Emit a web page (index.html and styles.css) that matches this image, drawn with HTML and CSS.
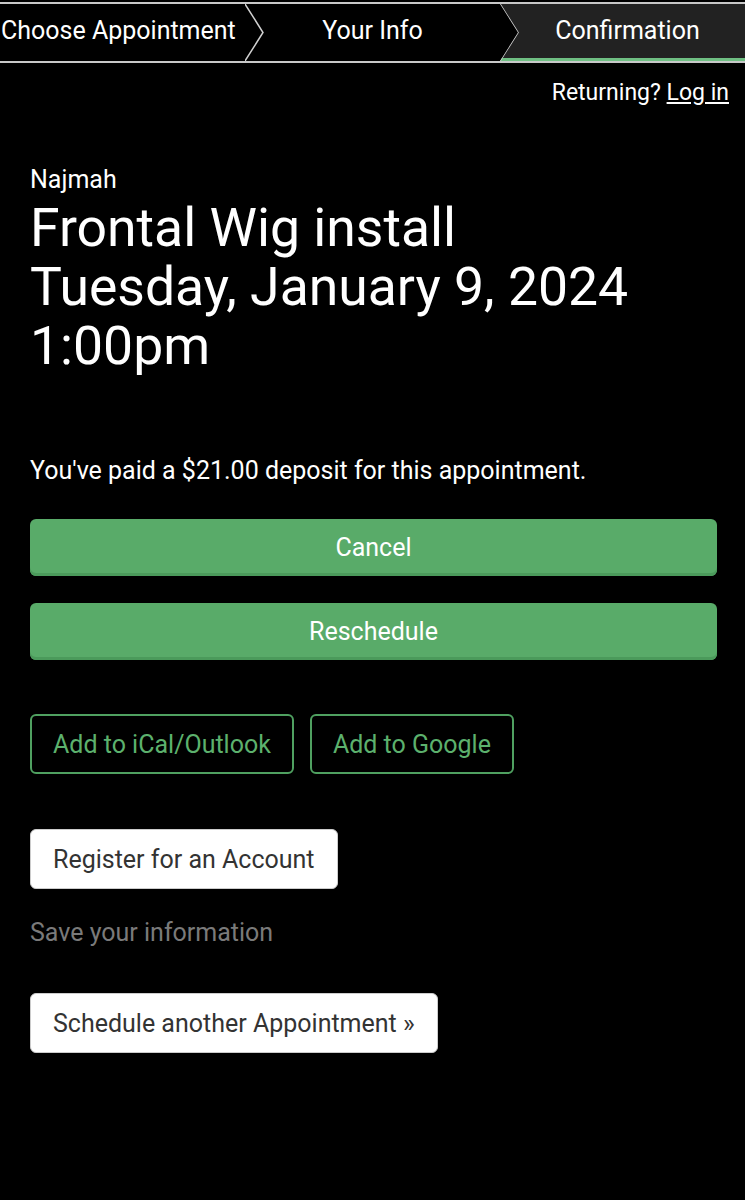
FILE: index.html
```html
<!DOCTYPE html>
<html>
<head>
<meta charset="utf-8">
<link rel="stylesheet" href="styles.css">
</head>
<body>
<nav class="steps">
  <div class="step step-first">Choose Appointment</div>
  <div class="step step-mid">
    <svg class="chev" viewBox="0 0 20 57" preserveAspectRatio="none"><polyline points="0,0 18,28.5 0,57" fill="none" stroke="#d0d0d0" stroke-width="1.5"/></svg>
    Your Info
  </div>
  <div class="step step-active">
    <svg class="chev" viewBox="0 0 20 57" preserveAspectRatio="none"><polyline points="0,0 18,28.5 0,57" fill="none" stroke="#d0d0d0" stroke-width="1.5"/></svg>
    Confirmation
  </div>
</nav>
<div class="returning">Returning? <a href="#" class="login">Log in</a></div>
<main class="content">
  <div class="name">Najmah</div>
  <h1 class="title">Frontal Wig install<br>Tuesday, January 9, 2024<br>1:00pm</h1>
  <p class="deposit">You've paid a $21.00 deposit for this appointment.</p>
  <button class="btn btn-green">Cancel</button>
  <button class="btn btn-green btn-second">Reschedule</button>
  <div class="cal-row">
    <button class="btn btn-outline">Add to iCal/Outlook</button>
    <button class="btn btn-outline">Add to Google</button>
  </div>
  <button class="btn btn-white btn-register">Register for an Account</button>
  <div class="save">Save your information</div>
  <button class="btn btn-white btn-schedule">Schedule another Appointment »</button>
</main>
</body>
</html>
```

FILE: styles.css
```css
html, body {
  margin: 0;
  padding: 0;
  background: #000;
  color: #fff;
  font-family: Roboto, "Noto Sans", sans-serif;
}
.steps {
  display: flex;
  margin-top: 2px;
  height: 57px;
  border-top: 2px solid #c8c8c8;
  border-bottom: 2px solid #c8c8c8;
}
.step {
  flex: 1 1 0;
  position: relative;
  display: flex;
  align-items: center;
  justify-content: center;
  padding-bottom: 5px;
  box-sizing: border-box;
  font-size: 25px;
  white-space: nowrap;
  color: #fff;
}
.step-first {
  flex: 0 0 245px;
  justify-content: flex-start;
  padding-left: 1px;
}
.step-mid {
  flex: 0 0 255px;
}
.step-active {
  background: #222;
  box-shadow: inset 0 -3px 0 #6fbf83;
  clip-path: polygon(0 0, 100% 0, 100% 100%, 0 100%, 18px 50%);
  padding-left: 10px;
}
.chev {
  position: absolute;
  left: 0;
  top: 0;
  width: 20px;
  height: 57px;
}
.returning {
  text-align: right;
  padding-right: 16px;
  margin-top: 17px;
  font-size: 23px;
  line-height: 26px;
}
.login {
  color: #fff;
  text-decoration: underline;
}
.content {
  padding: 0 28px 40px 30px;
  display: flex;
  flex-direction: column;
  align-items: flex-start;
}
.name {
  margin-top: 59px;
  font-size: 25px;
  line-height: 30px;
}
.title {
  margin: 3px 0 0;
  font-weight: 400;
  font-size: 53.5px;
  line-height: 59px;
}
.deposit {
  margin: 81px 0 0;
  font-size: 25px;
  line-height: 30px;
}
.btn {
  font-family: Roboto, "Noto Sans", sans-serif;
  font-size: 25px;
  cursor: pointer;
  border-radius: 6px;
}
.btn-green {
  align-self: stretch;
  height: 57px;
  margin-top: 33px;
  background: #59ab69;
  color: #fff;
  border: none;
  box-shadow: inset 0 -3px 0 #4b9a5b;
}
.btn-second {
  margin-top: 27px;
}
.cal-row {
  display: flex;
  gap: 16px;
  margin-top: 54px;
}
.btn-outline {
  height: 60px;
  padding: 0 21px;
  background: #000;
  color: #5cb16d;
  border: 2px solid #4fa060;
}
.btn-white {
  height: 60px;
  padding: 0 22px;
  background: #fff;
  color: #333;
  border: 1px solid #ccc;
}
.btn-register {
  margin-top: 55px;
}
.save {
  margin-top: 29px;
  font-size: 25px;
  line-height: 30px;
  color: #7a7a7a;
}
.btn-schedule {
  margin-top: 45px;
}
```
